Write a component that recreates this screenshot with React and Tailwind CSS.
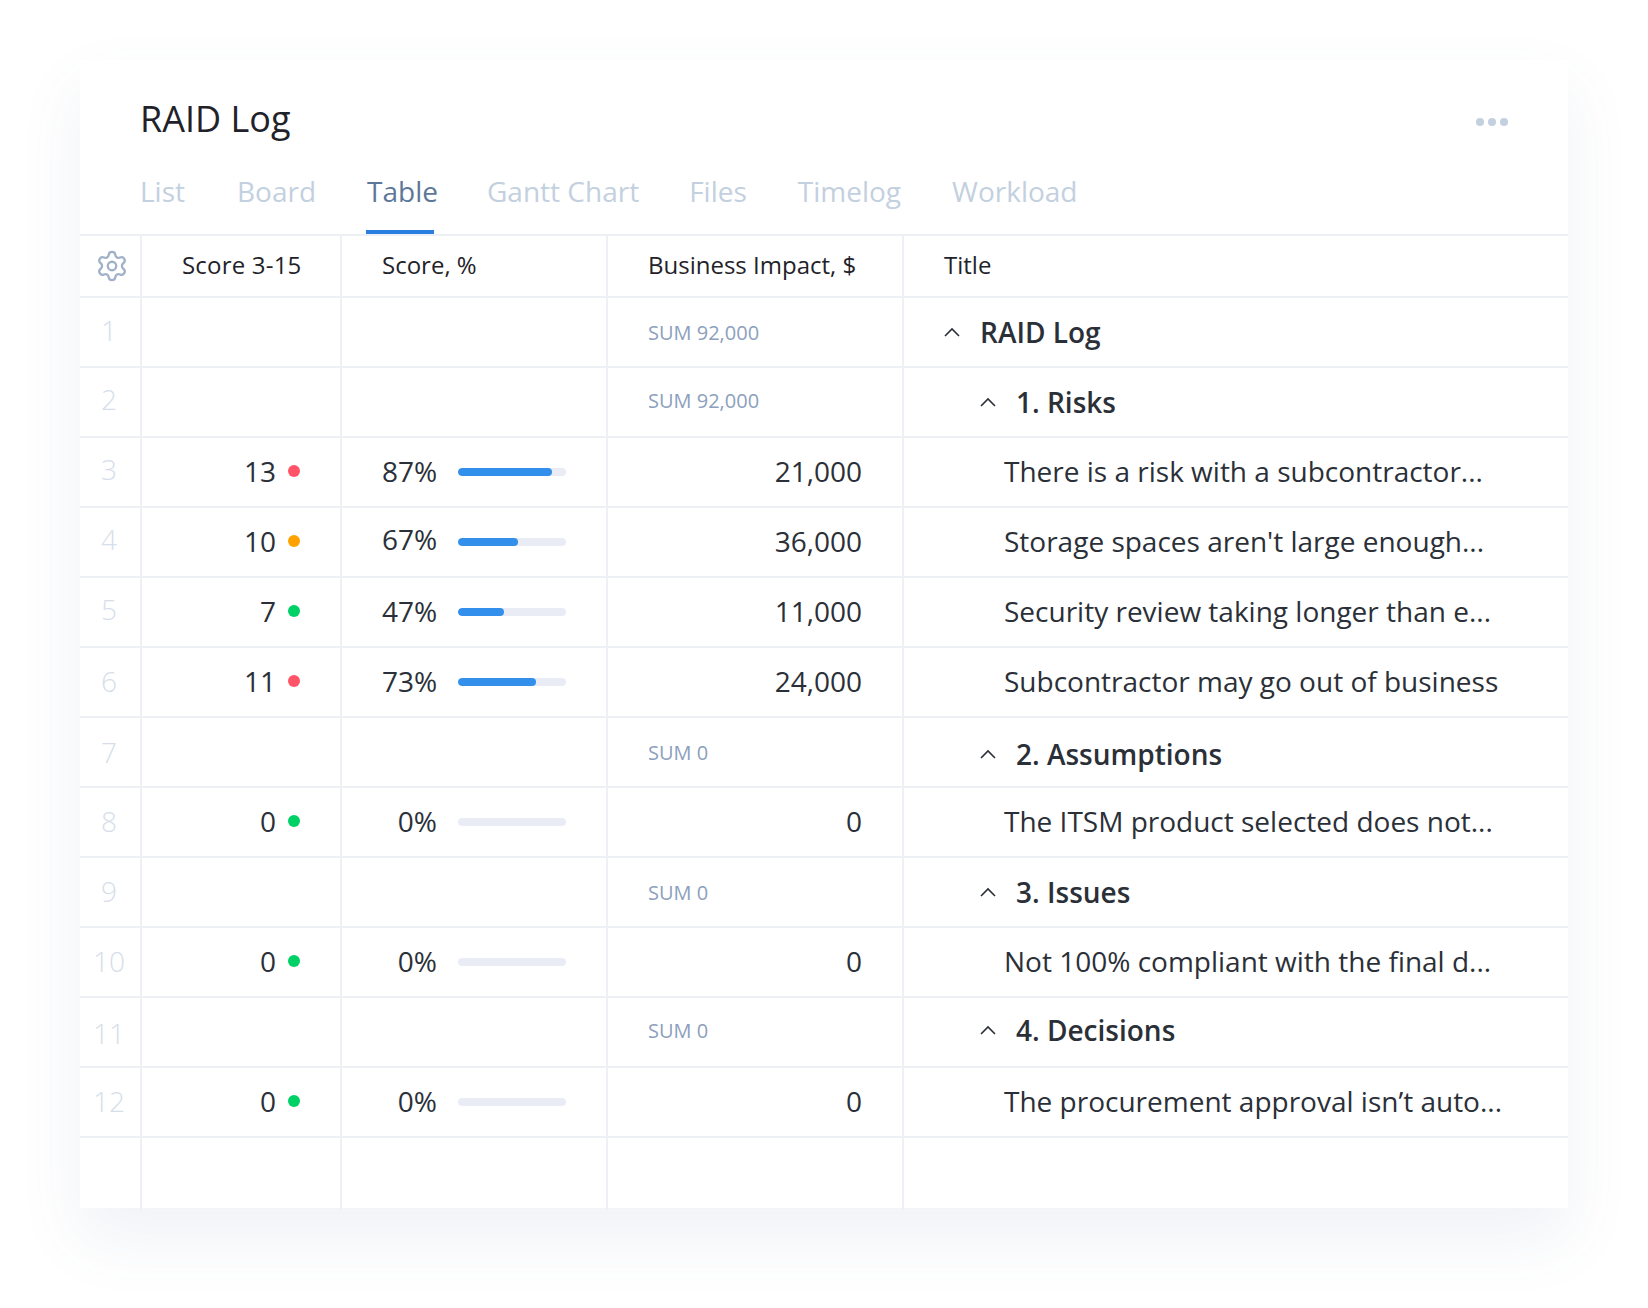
import React from "react";
import { Settings } from "lucide-react";

const tabs = [
  { t: "List", m: "" },
  { t: "Board", m: "ml-[2px]" },
  { t: "Table", m: "ml-[1px]" },
  { t: "Gantt Chart", m: "-ml-[1px]" },
  { t: "Files", m: "" },
  { t: "Timelog", m: "ml-[1px]" },
  { t: "Workload", m: "ml-[1px]" },
];

const rows = [
  { n: 1, np: "pb-[4px]", sp: "pt-[2px]", sum: "SUM 92,000", title: "RAID Log", level: 0 },
  { n: 2, np: "pb-[6px]", sp: "pb-[2px]", sum: "SUM 92,000", title: "1. Risks", level: 1 },
  { n: 3, np: "pb-[6px]", score: "13", dot: "bg-[#ff5468]", pct: "87%", fill: 87, val: "21,000", title: "There is a risk with a subcontractor..." },
  { n: 4, np: "pb-[6px]", pp: "pb-[6px]", score: "10", dot: "bg-[#ffa200]", pct: "67%", fill: 55.5, val: "36,000", title: "Storage spaces aren't large enough..." },
  { n: 5, np: "pb-[6px]", score: "7", dot: "bg-[#00d166]", pct: "47%", fill: 42.5, val: "11,000", title: "Security review taking longer than e..." },
  { n: 6, np: "pb-[2px]", score: "11", dot: "bg-[#ff5468]", pct: "73%", fill: 72.5, val: "24,000", title: "Subcontractor may go out of business" },
  { n: 7, np: "pb-0", sp: "pt-[2px]", tp: "pt-[4px]", sum: "SUM 0", title: "2. Assumptions", level: 1 },
  { n: 8, np: "pb-[2px]", score: "0", dot: "bg-[#00d166]", pct: "0%", fill: 0, val: "0", title: "The ITSM product selected does not..." },
  { n: 9, np: "pb-[2px]", sp: "pt-[2px]", sum: "SUM 0", title: "3. Issues", level: 1 },
  { n: 10, np: "pb-[2px]", score: "0", dot: "bg-[#00d166]", pct: "0%", fill: 0, val: "0", title: "Not 100% compliant with the final d..." },
  { n: 11, np: "pt-[2px]", sp: "pb-[2px]", tp: "pb-[4px]", sum: "SUM 0", title: "4. Decisions", level: 1 },
  { n: 12, np: "pb-[2px]", score: "0", dot: "bg-[#00d166]", pct: "0%", fill: 0, val: "0", title: "The procurement approval isn’t auto..." },
];

const cols = "grid grid-cols-[62px_200px_266px_296px_1fr]";
const cell = "flex items-center border-r-2 border-[#edf0f5] min-w-0";

function Caret() {
  return (
    <svg width="16" height="10" viewBox="0 0 16 10" fill="none" className="shrink-0">
      <path d="M1 9L8 2L15 9" stroke="#2b3038" strokeWidth="1.6" />
    </svg>
  );
}

function Row({ r }) {
  const isGroup = r.level !== undefined;
  return (
    <div className={`${cols} h-[70px] border-b-2 border-[#edf0f5]`}>
      <div className={`${cell} justify-center pr-[2px] ${r.np} text-[28px] font-light text-[#d6deea]`}>{r.n}</div>
      <div className={`${cell} justify-end gap-[12px] pr-[40px] text-[#2b3038]`}>
        {!isGroup && (
          <>
            <span className="mb-[2px]">{r.score}</span>
            <span className={`h-[12px] w-[12px] rounded-full ${r.dot} mb-[2px]`} />
          </>
        )}
      </div>
      <div className={`${cell} pl-[40px] text-[#2b3038]`}>
        {!isGroup && (
          <>
            <span className={`w-[55px] text-right ${r.pp || "pb-[2px]"}`}>{r.pct}</span>
            <div className="ml-[21px] h-[8px] w-[108px] rounded-full bg-[#e9ecf5] overflow-hidden">
              <div className="h-full rounded-full bg-[#338fec]" style={{ width: `${r.fill}%` }} />
            </div>
          </>
        )}
      </div>
      <div className={`${cell} ${isGroup ? `pl-[40px] ${r.sp}` : "justify-end pr-[40px] pb-[2px]"} text-[#2b3038]`}>
        {isGroup ? <span className="text-[20px] text-[#8ca0bd]">{r.sum}</span> : r.val}
      </div>
      <div className={`flex items-center min-w-0 text-[#2b3038] ${isGroup ? r.tp || "" : "pb-[2px]"}`}>
        {isGroup ? (
          <div className={`flex items-center gap-[20px] font-semibold ${r.level === 0 ? "pl-[40px]" : "pl-[76px]"}`}>
            <Caret />
            <span>{r.title}</span>
          </div>
        ) : (
          <span className="pl-[100px] whitespace-nowrap">{r.title}</span>
        )}
      </div>
    </div>
  );
}

export default function App() {
  return (
    <div className="w-[1648px] h-[1308px] bg-white pt-[60px] pl-[80px] font-['Open_Sans',sans-serif] text-[28px] leading-[38px]">
      <div className="w-[1488px] h-[1148px] bg-white shadow-[0_30px_60px_rgba(90,110,150,0.09)]">
        <div className="h-[174px] flex flex-col">
          <div className="flex items-start justify-between pl-[60px] pr-[60px] pt-[35px]">
            <h1 className="text-[36px] leading-[48px] font-normal text-[#1f2329]">RAID Log</h1>
            <div className="flex gap-[4px] pt-[23px]">
              <span className="h-[8px] w-[8px] rounded-full bg-[#c3d0e0]" />
              <span className="h-[8px] w-[8px] rounded-full bg-[#c3d0e0]" />
              <span className="h-[8px] w-[8px] rounded-full bg-[#c3d0e0]" />
            </div>
          </div>
          <div className="flex gap-[50px] pl-[60px] pt-[29px]">
            {tabs.map(({ t, m }) => (
              <div key={t} className={`relative h-[62px] ${m} ${t === "Table" ? "text-[#5d7798]" : "text-[#c3d0e0]"}`}>
                {t}
                {t === "Table" && <span className="absolute -left-[1px] bottom-0 h-[4px] w-[68px] bg-[#2a7de1]" />}
              </div>
            ))}
          </div>
        </div>
        <div className="border-t-2 border-[#edf0f5]">
          <div className={`${cols} h-[62px] border-b-2 border-[#edf0f5] text-[24px] text-[#1f2329]`}>
            <div className={`${cell} justify-start pl-[15px]`}>
              <Settings size={34} strokeWidth={1.6} color="#a0b0c8" />
            </div>
            <div className={`${cell} pl-[40px] pb-[2px] tracking-[0.2px]`}>Score 3-15</div>
            <div className={`${cell} pl-[40px] pb-[2px]`}>Score, %</div>
            <div className={`${cell} pl-[40px] pb-[2px]`}>Business Impact, $</div>
            <div className="flex items-center pl-[40px] pb-[2px]">Title</div>
          </div>
          {rows.map((r) => (
            <Row key={r.n} r={r} />
          ))}
          <div className={`${cols} h-[72px]`}>
            <div className={cell} />
            <div className={cell} />
            <div className={cell} />
            <div className={cell} />
            <div />
          </div>
        </div>
      </div>
    </div>
  );
}
